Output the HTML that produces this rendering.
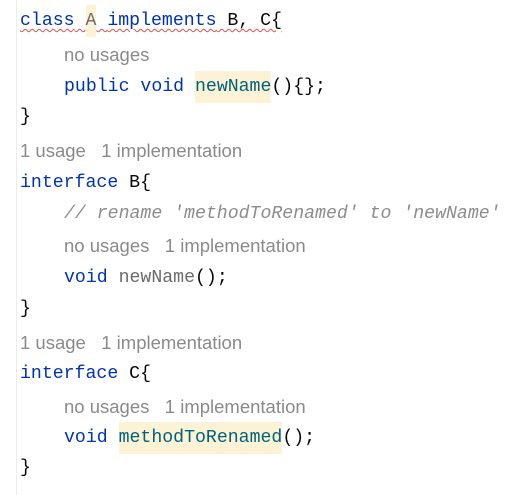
<!DOCTYPE html>
<html><head><meta charset="utf-8"><style>
body{margin:0;width:510px;height:495px;background:#fff;position:relative;overflow:hidden}
.gut{position:absolute;left:16px;top:0;width:1px;height:495px;background:#ececec}
.l{position:absolute;height:32px;line-height:32px;white-space:pre;font-family:"Liberation Mono",monospace;font-size:18.2px;color:#080808}
.h{font-family:"Liberation Sans",sans-serif;font-size:18.5px;color:#8a8a8a}
.k{color:#0033b3}.m{color:#00627a}.g{color:#6b6b6b}
.c{color:#8c8c8c;font-style:italic}
.hl{background:#fcf3d6;display:inline-block;height:32px;vertical-align:top}
.w{text-decoration:underline wavy #e05050;text-decoration-thickness:1px;text-underline-offset:3px}
</style></head><body>
<div class="gut"></div>
<div class="l w" style="left:20px;top:5px"><span class="k">class</span> <span class="hl g">A</span> <span class="k">implements</span> B, C{</div>
<div class="l h" style="left:64px;top:39px">no usages</div>
<div class="l" style="left:64px;top:71px"><span class="k">public void</span> <span class="m hl">newName</span>(){};</div>
<div class="l" style="left:20px;top:101px">}</div>
<div class="l h" style="left:20px;top:135px">1 usage &nbsp;&nbsp;1 implementation</div>
<div class="l" style="left:20px;top:167px"><span class="k">interface</span> B{</div>
<div class="l c" style="left:64px;top:198px">// rename 'methodToRenamed' to 'newName'</div>
<div class="l h" style="left:64px;top:230px">no usages &nbsp;&nbsp;1 implementation</div>
<div class="l" style="left:64px;top:262px"><span class="k">void</span> <span class="g">newName</span>();</div>
<div class="l" style="left:20px;top:293px">}</div>
<div class="l h" style="left:20px;top:327px">1 usage &nbsp;&nbsp;1 implementation</div>
<div class="l" style="left:20px;top:358px"><span class="k">interface</span> C{</div>
<div class="l h" style="left:64px;top:391px">no usages &nbsp;&nbsp;1 implementation</div>
<div class="l" style="left:64px;top:422px"><span class="k">void</span> <span class="m hl">methodToRenamed</span>();</div>
<div class="l" style="left:20px;top:452px">}</div>
</body></html>
